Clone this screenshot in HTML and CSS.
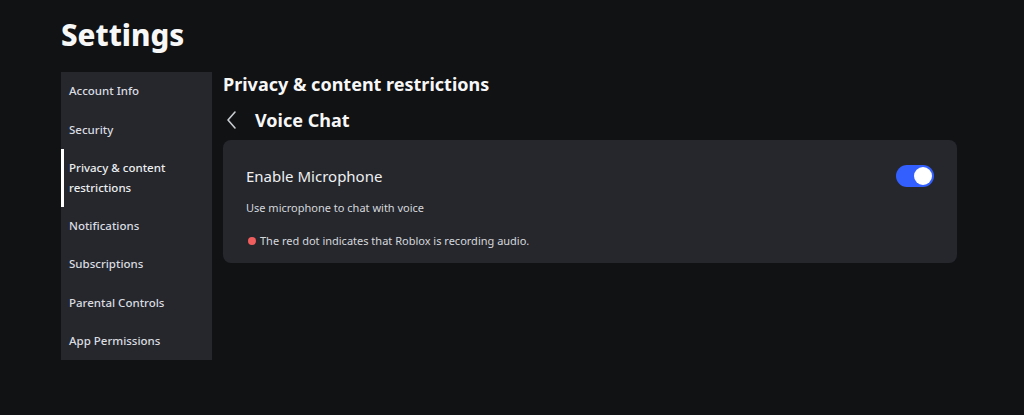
FILE: index.html
```html
<!DOCTYPE html>
<html>
<head>
<meta charset="utf-8">
<link rel="stylesheet" href="styles.css">
</head>
<body>
<div class="page">
  <h1 class="title">Settings</h1>
  <div class="layout">
    <nav class="sidebar">
      <div class="nav-item">Account Info</div>
      <div class="nav-item">Security</div>
      <div class="nav-item active">Privacy &amp; content<br>restrictions</div>
      <div class="nav-item">Notifications</div>
      <div class="nav-item">Subscriptions</div>
      <div class="nav-item">Parental Controls</div>
      <div class="nav-item">App Permissions</div>
    </nav>
    <main class="content">
      <h2 class="section-title">Privacy &amp; content restrictions</h2>
      <div class="subhead">
        <svg class="back" width="12" height="20" viewBox="0 0 12 20"><path d="M10 2 L3 10 L10 18" fill="none" stroke="#c8cbd0" stroke-width="1.6" stroke-linecap="round" stroke-linejoin="round"/></svg>
        <span class="subhead-text">Voice Chat</span>
      </div>
      <div class="card">
        <div class="card-row">
          <span class="card-title">Enable Microphone</span>
          <span class="toggle"><span class="knob"></span></span>
        </div>
        <div class="card-desc">Use microphone to chat with voice</div>
        <div class="card-note"><span class="dot"></span>The red dot indicates that Roblox is recording audio.</div>
      </div>
    </main>
  </div>
</div>
</body>
</html>
```
FILE: styles.css
```css
html, body {
  margin: 0;
  padding: 0;
  background: #111214;
  color: #f7f7f8;
  font-family: "Noto Sans", "Open Sans", sans-serif;
}
.page {
  padding: 15px 0 0 61px;
  width: 896px;
}
.title {
  margin: 0;
  font-size: 29.5px;
  font-weight: 800;
  line-height: 40px;
  letter-spacing: 0;
  height: 57px;
}
.layout {
  display: flex;
  gap: 11px;
  align-items: flex-start;
}
.sidebar {
  width: 151px;
  background: #25272d;
  flex-shrink: 0;
}
.nav-item {
  padding: 9.25px 8px 9px 5px;
  font-size: 11.5px;
  line-height: 20px;
  font-weight: 500;
  color: #dadce0;
  border-left: 3px solid transparent;
}
.nav-item.active {
  border-left-color: #ffffff;
  color: #eceef0;
}
.content {
  flex: 1;
  width: 734px;
}
.section-title {
  margin: 0;
  font-size: 18px;
  font-weight: 700;
  line-height: 24px;
  height: 32px;
}
.subhead {
  display: flex;
  align-items: center;
  height: 32px;
  margin-bottom: 4px;
}
.back {
  margin-left: 2px;
  margin-right: 18px;
}
.subhead-text {
  font-size: 18px;
  font-weight: 700;
}
.card {
  background: #25272d;
  border-radius: 8px;
  padding: 24px 23px 18px 23px;
  height: 81px;
}
.card-row {
  display: flex;
  justify-content: space-between;
  align-items: center;
  height: 24px;
}
.card-title {
  font-size: 15px;
  font-weight: 400;
  color: #eef0f2;
}
.toggle {
  width: 38px;
  height: 22px;
  border-radius: 11px;
  background: #335fff;
  position: relative;
}
.knob {
  position: absolute;
  right: 2px;
  top: 2px;
  width: 18px;
  height: 18px;
  border-radius: 50%;
  background: #ffffff;
}
.card-desc {
  font-size: 11px;
  line-height: 16px;
  margin-top: 12px;
  color: #d5d7dc;
}
.card-note {
  font-size: 11px;
  line-height: 16px;
  margin-top: 17px;
  color: #d5d7dc;
  display: flex;
  align-items: center;
}
.dot {
  width: 8px;
  height: 8px;
  border-radius: 50%;
  background: #f05d5d;
  margin: 0 4px 0 2px;
}
```
